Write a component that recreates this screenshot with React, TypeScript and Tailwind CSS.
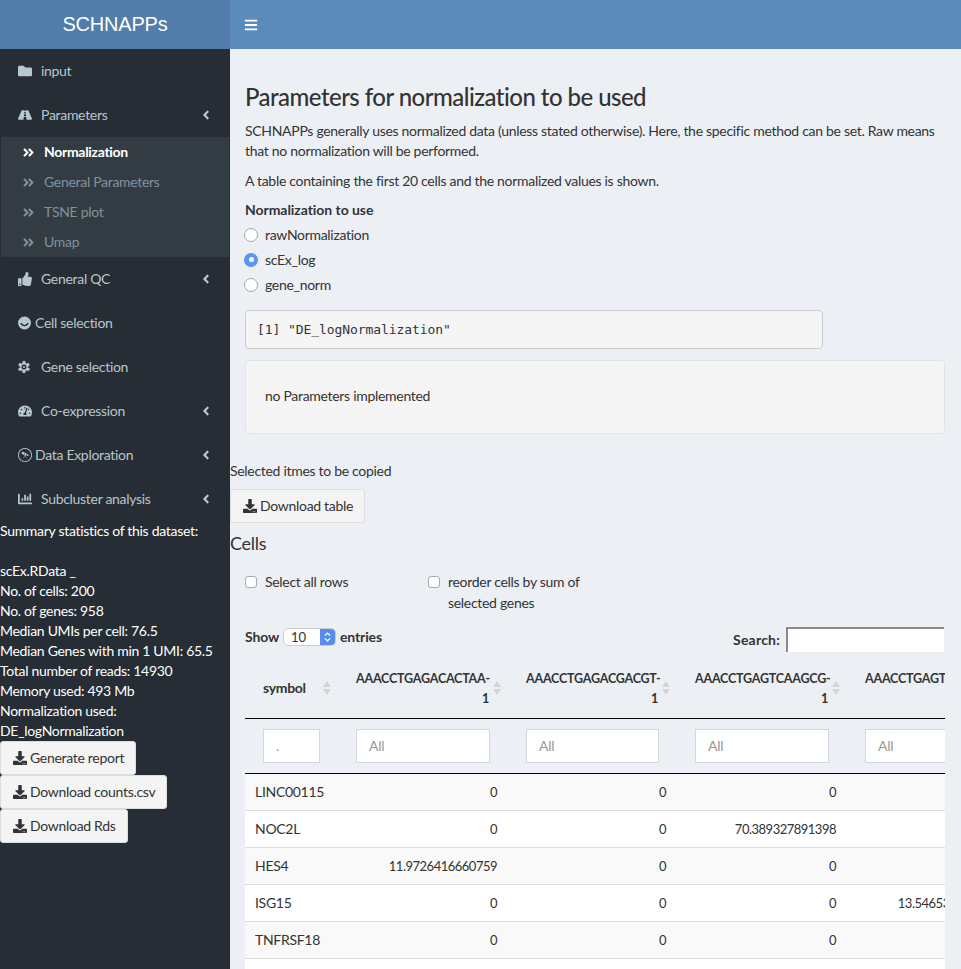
import React from 'react';
import {
  FaFolder, FaRoad, FaThumbsUp, FaTachometerAlt, FaWpexplorer, FaChartBar,
  FaAngleLeft, FaAngleDoubleRight, FaDownload, FaBars,
} from 'react-icons/fa';

function SmileIcon() {
  return (
    <svg width="13" height="14" viewBox="0 0 24 24" className="block">
      <circle cx="12" cy="12" r="12" fill="currentColor" />
      <path d="M5 12.5Q12 21 19 12.5" fill="none" stroke="#262d34" strokeWidth="2.4" />
    </svg>
  );
}

function GeneIcon() {
  const petals = [0, 60, 120, 180, 240, 300];
  return (
    <svg width="12" height="14" viewBox="0 0 24 24" className="block">
      {petals.map((a) => (
        <circle key={a} cx={12 + 9 * Math.cos((a * Math.PI) / 180 + Math.PI / 2)} cy={12 + 9 * Math.sin((a * Math.PI) / 180 + Math.PI / 2)} r="3.4" fill="currentColor" />
      ))}
      <circle cx="12" cy="12" r="6.5" fill="none" stroke="currentColor" strokeWidth="3" />
      <circle cx="12" cy="12" r="2" fill="currentColor" />
    </svg>
  );
}

const menu = [
  { label: 'General QC', icon: <FaThumbsUp />, arrow: true, gap: 'ml-[9px]' },
  { label: 'Cell selection', icon: <SmileIcon />, arrow: false, gap: 'ml-[4px]' },
  { label: 'Gene selection', icon: <GeneIcon />, arrow: false, gap: 'ml-[11px]' },
  { label: 'Co-expression', icon: <FaTachometerAlt />, arrow: true, gap: 'ml-[9px]' },
  { label: 'Data Exploration', icon: <FaWpexplorer />, arrow: true, gap: 'ml-[3px]' },
  { label: 'Subcluster analysis', icon: <FaChartBar />, arrow: true, gap: 'ml-[9px]' },
];

const subItems = ['Normalization', 'General Parameters', 'TSNE plot', 'Umap'];

const stats = [
  'scEx.RData _',
  'No. of cells: 200',
  'No. of genes: 958',
  'Median UMIs per cell: 76.5',
  'Median Genes with min 1 UMI: 65.5',
  'Total number of reads: 14930',
  'Memory used: 493 Mb',
  'Normalization used:',
  'DE_logNormalization',
];

const rows = [
  ['LINC00115', '0', '0', '0', ''],
  ['NOC2L', '0', '0', '70.389327891398', ''],
  ['HES4', '11.9726416660759', '0', '0', ''],
  ['ISG15', '0', '0', '0', '13.5465367812345'],
  ['TNFRSF18', '0', '0', '0', ''],
  ['', '', '', '', ''],
];

const columns = ['AAACCTGAGACACTAA-', 'AAACCTGAGACGACGT-', 'AAACCTGAGTCAAGCG-'];

function DownloadButton({ label }: { label: string }) {
  return (
    <button className="flex items-center gap-[3px] h-[34px] pl-[12px] pr-[11px] bg-[#f4f4f4] border border-[#dddddd] rounded-[3px] text-[#333333]">
      <FaDownload className="text-[14px]" />
      {label}
    </button>
  );
}

function SortArrows() {
  return (
    <span className="absolute right-[7px] top-[17px] flex flex-col gap-[2px]">
      <span className="w-0 h-0 border-x-[4px] border-x-transparent border-b-[6px] border-b-[#d5d5d5]" />
      <span className="w-0 h-0 border-x-[4px] border-x-transparent border-t-[6px] border-t-[#d5d5d5]" />
    </span>
  );
}

function Radio({ label, checked }: { label: string; checked?: boolean }) {
  return (
    <div className="flex items-center h-[25px] -ml-[1px]">
      {checked ? (
        <span className="w-[14px] h-[14px] rounded-full bg-[#5a95f5] flex items-center justify-center">
          <span className="w-[5px] h-[5px] rounded-full bg-white" />
        </span>
      ) : (
        <span className="w-[14px] h-[14px] rounded-full bg-white border border-[#a9a9a9]" />
      )}
      <span className="ml-[7px]">{label}</span>
    </div>
  );
}

function Checkbox() {
  return <span className="shrink-0 w-[12px] h-[12px] mt-[4px] bg-white border border-[#a9a9a9] rounded-[3px]" />;
}

export default function App() {
  return (
    <div className="flex h-[969px] w-[961px] overflow-hidden bg-[#ecf0f5] font-['Lato',sans-serif] text-[14px] tracking-[-0.3px] leading-[20px] text-[#333333]">
      {/* sidebar */}
      <aside className="w-[230px] shrink-0 bg-[#262d34]">
        <div className="h-[49px] pb-[2px] bg-[#527ca9] text-white text-[20px] tracking-[-0.2px] flex items-center justify-center font-['Liberation_Sans',sans-serif]">SCHNAPPs</div>
        <div className="flex items-center h-[44px] pl-[18px] text-[#b8c7ce]">
          <FaFolder className="w-[14px] text-[14px]" />
          <span className="ml-[9px]">input</span>
        </div>
        <div className="flex items-center h-[44px] pl-[18px] pr-[17px] text-[#b8c7ce]">
          <FaRoad className="w-[14px] text-[14px]" />
          <span className="ml-[9px]">Parameters</span>
          <FaAngleLeft className="ml-auto text-[14px]" />
        </div>
        <div className="mx-[1px] bg-[#343c43]">
          {subItems.map((item, i) => (
            <div key={item} className={`flex items-center h-[30px] pl-[21px] ${i === 0 ? 'text-white font-bold' : 'text-[#7f929f]'}`}>
              <FaAngleDoubleRight className="text-[13px]" />
              <span className="ml-[9px]">{item}</span>
            </div>
          ))}
        </div>
        {menu.map((m) => (
          <div key={m.label} className="flex items-center h-[44px] pl-[18px] pr-[17px] text-[#b8c7ce]">
            <span className="text-[14px]">{m.icon}</span>
            <span className={m.gap}>{m.label}</span>
            {m.arrow && <FaAngleLeft className="ml-auto text-[14px]" />}
          </div>
        ))}
        <div className="text-white">
          <div className="mb-[20px]">Summary statistics of this dataset:</div>
          {stats.map((s) => (
            <div key={s}>{s}</div>
          ))}
        </div>
        <div className="flex flex-col items-start">
          <DownloadButton label="Generate report" />
          <DownloadButton label="Download counts.csv" />
          <DownloadButton label="Download Rds" />
        </div>
      </aside>

      {/* main */}
      <main className="flex-1 min-w-0">
        <div className="h-[49px] bg-[#5b8bbb] flex items-center pl-[14px] text-white">
          <FaBars className="text-[14px]" />
        </div>
        <div className="pr-[16px]">
          <div className="pl-[15px]">
            <h2 className="text-[24px] tracking-[-0.54px] leading-[26px] font-medium mt-[35px] text-[#333333]">Parameters for normalization to be used</h2>
            <p className="mt-[11px]">SCHNAPPs generally uses normalized data (unless stated otherwise). Here, the specific method can be set. Raw means that no normalization will be performed.</p>
            <p className="mt-[10px]">A table containing the first 20 cells and the normalized values is shown.</p>
            <div className="font-bold tracking-[-0.05px] mt-[9px]">Normalization to use</div>
            <div className="mt-[2px]">
              <Radio label="rawNormalization" />
              <Radio label="scEx_log" checked />
              <Radio label="gene_norm" />
            </div>
            <pre className="mt-[13px] w-[578px] h-[39px] leading-[37px] px-[11px] bg-[#f5f5f5] border border-[#cccccc] rounded-[4px] text-[13px] tracking-[-0.08px] font-['DejaVu_Sans_Mono',monospace]">[1] "DE_logNormalization"</pre>
            <div className="mt-[11px] h-[74px] flex items-center px-[19px] pb-[2px] bg-[#f5f5f5] border border-[#e3e3e3] rounded-[4px]">no Parameters implemented</div>
          </div>
          <div className="mt-[27px]">Selected itmes to be copied</div>
          <div className="mt-[8px] flex">
            <DownloadButton label="Download table" />
          </div>
          <h4 className="text-[18px] leading-[20px] mt-[10px]">Cells</h4>

          <div className="pl-[15px]">
            <div className="flex mt-[19px]">
              <div className="flex items-start w-[183px]">
                <Checkbox />
                <span className="ml-[8px]">Select all rows</span>
              </div>
              <div className="flex items-start w-[180px]">
                <Checkbox />
                <span className="ml-[8px] leading-[21px] -mt-[1px]">reorder cells by sum of selected genes</span>
              </div>
            </div>
            <div className="flex justify-between items-start mt-[14px] h-[36px]">
              <div className="flex items-center font-bold tracking-[-0.15px]">
                Show
                <span className="mx-[4px] flex items-center w-[53px] h-[18px] rounded-[5px] border border-[#cccccc] bg-white font-normal text-[13px] overflow-hidden">
                  <span className="flex-1 pl-[7px] leading-[16px]">10</span>
                  <span className="w-[15px] h-full bg-[#5a8cf0] flex items-center justify-center">
                    <svg width="7" height="12" viewBox="0 0 7 12" fill="none" stroke="white" strokeWidth="1.2">
                      <path d="M1 4.5 3.5 2 6 4.5M1 7.5 3.5 10 6 7.5" />
                    </svg>
                  </span>
                </span>
                entries
              </div>
              <div className="flex items-center font-bold tracking-[0.2px]">
                Search:
                <span className="ml-[6px] mr-[1px] block w-[158px] h-[25px] bg-white border-t-2 border-l-2 border-t-[#8a8a8a] border-l-[#8a8a8a]" />
              </div>
            </div>
            <div className="overflow-hidden mt-[1px]">
              <table className="table-fixed border-collapse w-[772px]">
                <colgroup>
                  <col className="w-[93px]" />
                  <col className="w-[170px]" />
                  <col className="w-[169px]" />
                  <col className="w-[170px]" />
                  <col className="w-[170px]" />
                </colgroup>
                <thead>
                  <tr className="h-[54px] border-b border-black">
                    <th className="relative text-left pl-[18px] pb-[6px] font-bold">symbol<SortArrows /></th>
                    {columns.map((c) => (
                      <th key={c} className="relative text-right text-[12.5px] tracking-[-0.22px] font-bold pl-[18px] pr-[19px] pb-[4px] whitespace-nowrap">{c}<br />1<SortArrows /></th>
                    ))}
                    <th className="text-left text-[12.5px] tracking-[-0.22px] font-bold pl-[18px] pb-[24px] whitespace-nowrap">AAACCTGAGTCAAGCG-</th>
                  </tr>
                  <tr className="h-[55px] border-b border-black">
                    <td className="px-[18px]">
                      <div className="h-[34px] w-[57px] bg-white border border-[#d2d6de] text-[#999999] pl-[12px] leading-[32px]">.</div>
                    </td>
                    {[0, 1, 2, 3].map((i) => (
                      <td key={i} className="px-[18px]">
                        <div className="h-[34px] bg-white border border-[#d2d6de] text-[#999999] pl-[12px] leading-[32px]">All</div>
                      </td>
                    ))}
                  </tr>
                </thead>
                <tbody>
                  {rows.map((r, i) => (
                    <tr key={i} className={`h-[37px] border-b border-[#dddddd] ${i % 2 === 0 ? 'bg-[#f9f9f9]' : 'bg-white'}`}>
                      <td className="pl-[10px]">{r[0]}</td>
                      {r.slice(1).map((v, j) => (
                        <td key={j} className="pr-[11px] text-right text-[13px] tracking-[-0.5px] whitespace-nowrap">{v}</td>
                      ))}
                    </tr>
                  ))}
                </tbody>
              </table>
            </div>
          </div>
        </div>
      </main>
    </div>
  );
}
